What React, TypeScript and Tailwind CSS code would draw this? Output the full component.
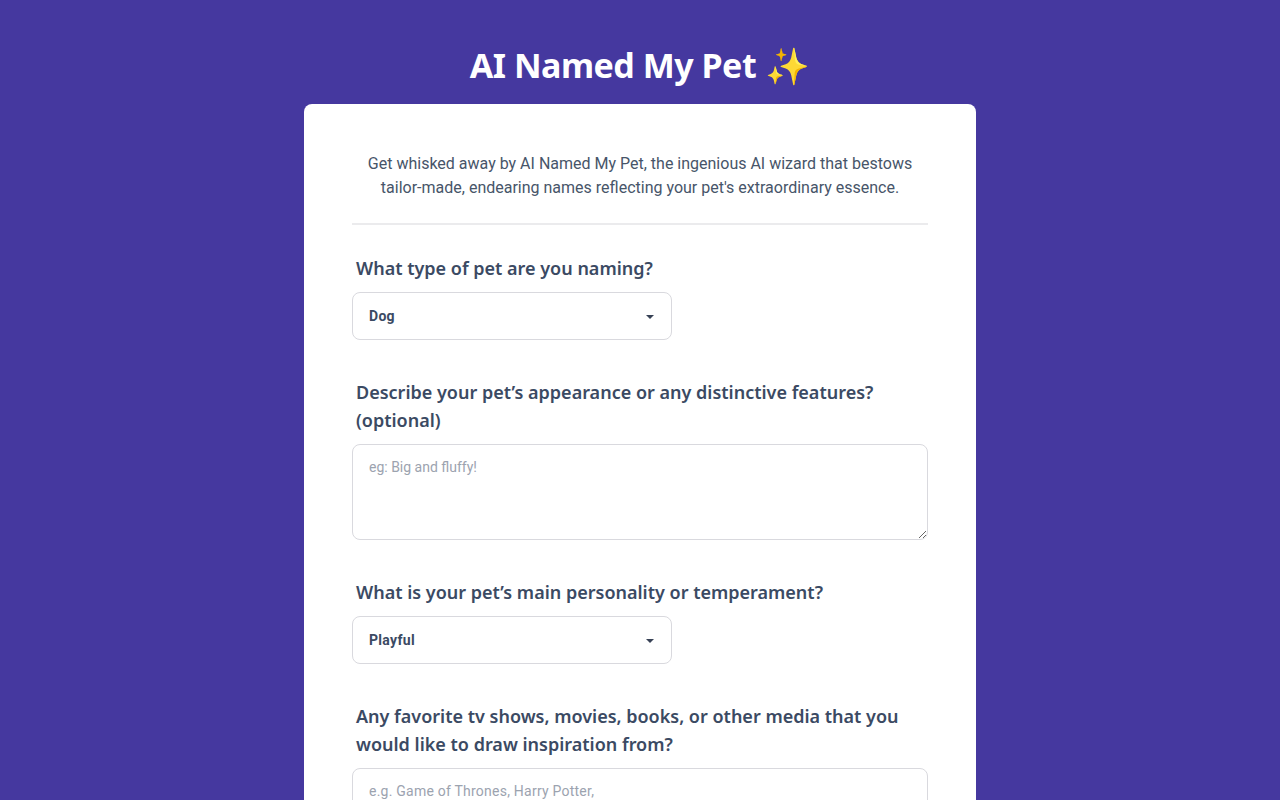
const bodyFont = "font-['Roboto',sans-serif]";
const labelClass =
  "block pl-1 text-[18px] leading-7 font-semibold text-[#3b4a63] font-['Noto_Sans',sans-serif]";
const selectClass =
  "flex h-12 w-80 items-center justify-between rounded-lg border border-[#d9d9de] bg-white pl-4 pr-4 text-sm font-bold tracking-[0.3px] text-[#3b4a63]";
const textareaClass =
  "block h-24 w-full resize-y rounded-lg border border-[#d9d9de] bg-white px-4 py-3 text-sm leading-5 outline-none placeholder:text-[#9ca3af]";

function SelectBox({ value }: { value: string }) {
  return (
    <div className={selectClass}>
      <span>{value}</span>
      <svg width="8" height="4" viewBox="0 0 8 4" className="mr-[1px] mt-[2px]">
        <path d="M0 0h8L4 4z" fill="#374155" />
      </svg>
    </div>
  );
}

export default function App() {
  return (
    <main className={`h-screen overflow-hidden bg-[#45389f] ${bodyFont}`}>
      <h1 className="flex h-[104px] items-end justify-center gap-[9px] pb-[13px] text-[34px] leading-[51px] font-bold tracking-[-0.5px] text-white font-['Noto_Sans',sans-serif]">
        AI Named My Pet <span className="text-[36px] tracking-normal">✨</span>
      </h1>

      <section className="mx-auto w-[672px] rounded-lg bg-white p-12">
        <p className="text-center text-base leading-6 text-[#475569]">
          Get whisked away by AI Named My Pet, the ingenious AI wizard that bestows
          tailor-made, endearing names reflecting your pet's extraordinary essence.
        </p>
        <hr className="mt-[23px] mb-[29px] border-t-2 border-[#ebebed]" />

        <div className="flex flex-col gap-[38px]">
          <div className="flex flex-col gap-[10px]">
            <label className={labelClass}>What type of pet are you naming?</label>
            <SelectBox value="Dog" />
          </div>

          <div className="flex flex-col gap-[10px]">
            <label className={labelClass}>
              Describe your pet’s appearance or any distinctive features? (optional)
            </label>
            <textarea rows={4} placeholder="eg: Big and fluffy!" className={textareaClass} />
          </div>

          <div className="flex flex-col gap-[10px]">
            <label className={labelClass}>What is your pet’s main personality or temperament?</label>
            <SelectBox value="Playful" />
          </div>

          <div className="flex flex-col gap-[10px]">
            <label className={labelClass}>
              Any favorite tv shows, movies, books, or other media that you would like to draw
              inspiration from?
            </label>
            <textarea
              rows={4}
              placeholder="e.g. Game of Thrones, Harry Potter,"
              className={`${textareaClass} tracking-[0.23px]`}
            />
          </div>
        </div>
      </section>
    </main>
  );
}
